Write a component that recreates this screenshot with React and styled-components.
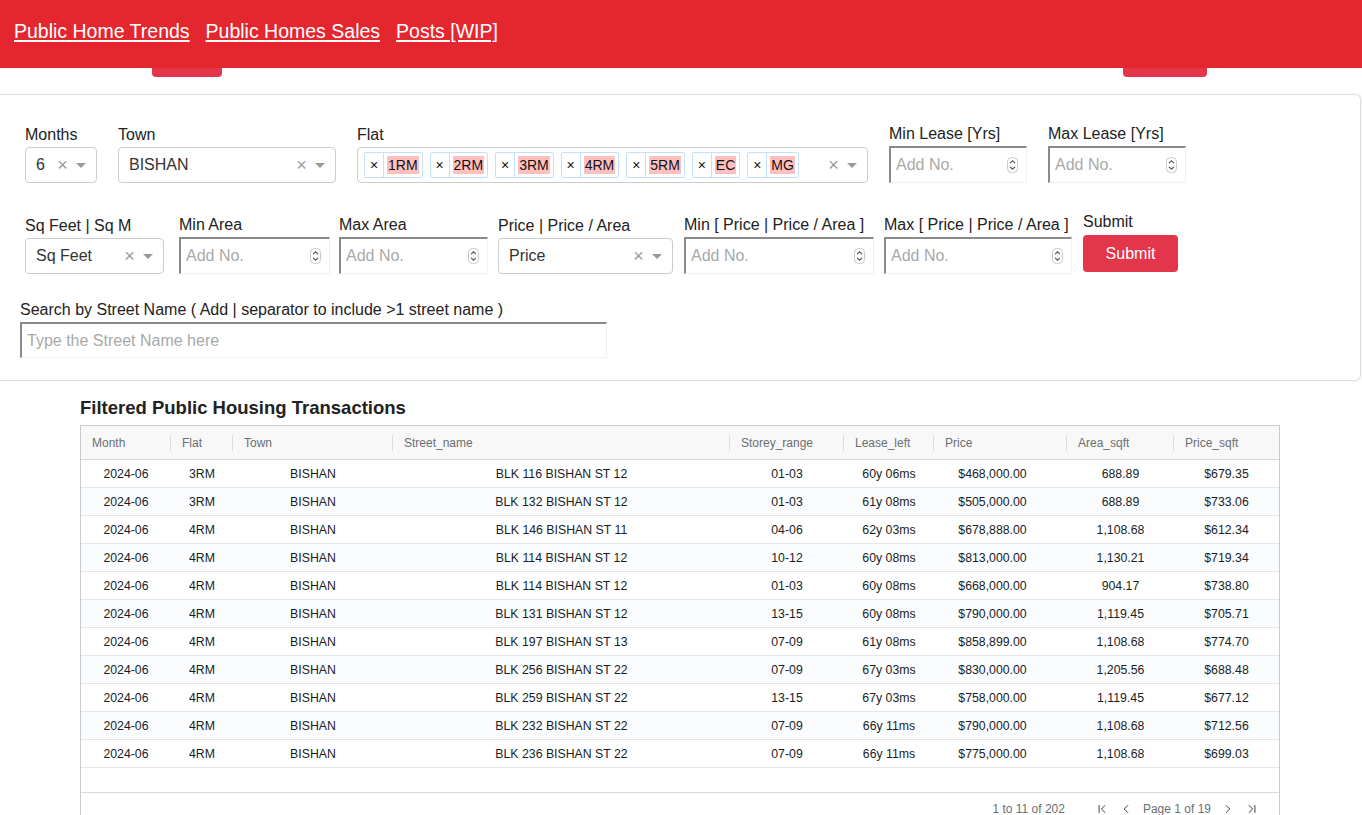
import styled, { createGlobalStyle } from "styled-components";
import { ChevronFirst, ChevronLeft, ChevronRight, ChevronLast } from "lucide-react";

const GlobalStyle = createGlobalStyle`
  html, body {
    margin: 0;
    padding: 0;
    background: #fff;
    font-family: "Liberation Sans", Arial, sans-serif;
    color: #212529;
  }
  * { box-sizing: border-box; }
`;

const TopBar = styled.nav`
  position: fixed;
  top: 0;
  left: 0;
  right: 0;
  height: 68px;
  background: #e4262f;
  display: flex;
  align-items: center;
  gap: 16px;
  padding: 0 0 6px 14px;
  z-index: 10;
`;

const NavLink = styled.a`
  color: #fff;
  font-size: 19.5px;
  text-decoration: underline;
  text-underline-offset: 2px;
  text-decoration-thickness: 1.5px;
  cursor: pointer;
`;

const PeekRow = styled.div`
  height: 77px;
  display: flex;
  align-items: flex-end;
`;

const PeekButton = styled.div`
  width: ${(p) => p.$w}px;
  height: 40px;
  margin-left: ${(p) => p.$ml}px;
  background: #e4364a;
  border-radius: 4px;
`;

const FilterCard = styled.section`
  margin-top: 17px;
  width: 1361px;
  border: 1px solid #dedede;
  border-left: none;
  border-radius: 0 6px 6px 0;
  padding: 29px 0 22px 20px;
  box-shadow: 2px 0 3px rgba(0, 0, 0, 0.04);
`;

const FieldRow = styled.div`
  display: flex;
  align-items: flex-end;
  gap: ${(p) => p.$gap || 0}px;
  padding-left: ${(p) => p.$pl || 0}px;
  margin-top: ${(p) => p.$mt || 0}px;
`;

const Field = styled.div`
  display: flex;
  flex-direction: column;
  width: ${(p) => (p.$w ? `${p.$w}px` : "auto")};
  margin-bottom: ${(p) => p.$mb || 0}px;
`;

const Label = styled.label`
  font-size: 16px;
  line-height: 19px;
  color: #222;
  margin-bottom: ${(p) => p.$mb ?? 3}px;
  white-space: nowrap;
`;

const SelectBox = styled.div`
  width: ${(p) => p.$w}px;
  height: 36px;
  border: 1px solid #ccc;
  border-radius: 4px;
  display: flex;
  align-items: center;
  padding-left: ${(p) => p.$pl ?? 10}px;
  background: #fff;
`;

const SelectValue = styled.span`
  flex: 1;
  font-size: 16px;
  color: #333;
  white-space: nowrap;
`;

const ClearX = styled.span`
  width: 17px;
  text-align: center;
  font-size: 18px;
  line-height: 1;
  color: #999;
`;

const ArrowZone = styled.span`
  width: 25px;
  display: flex;
  justify-content: center;
  padding-right: 5px;

  &::before {
    content: "";
    border-style: solid;
    border-width: 5px 5px 0;
    border-color: #999 transparent transparent;
  }
`;

const Chips = styled.div`
  flex: 1;
  display: flex;
  gap: 7px;
`;

const Chip = styled.span`
  display: flex;
  height: 26px;
  border: 1px solid #c2e0ff;
  border-radius: 2px;
  font-size: 14px;
  color: #111;
`;

const ChipX = styled.span`
  width: 19px;
  display: flex;
  align-items: center;
  justify-content: center;
  border-right: 1px solid #c2e0ff;
  font-size: 14px;
`;

const ChipLabel = styled.span`
  display: flex;
  align-items: center;
  padding: 0 3px;

  mark {
    background: #ffbfbf;
    color: #111;
    padding: 1px 1px;
  }
`;

const NumberBox = styled.div`
  width: ${(p) => p.$w}px;
  height: ${(p) => p.$h || 37}px;
  display: flex;
  align-items: center;
  border-top: 2px solid #8a8a8a;
  border-left: 2px solid #8a8a8a;
  border-right: 1px solid #f1f1f1;
  border-bottom: 1px solid #f1f1f1;
  padding: 0 8px 0 5px;
  background: #fff;
`;

const NumberInput = styled.input`
  flex: 1;
  min-width: 0;
  border: none;
  outline: none;
  font-family: inherit;
  font-size: 16px;
  color: #333;
  padding: 0;

  &::placeholder {
    color: #a9a9a9;
  }
`;

const SubmitButton = styled.button`
  width: 95px;
  height: 37px;
  border: none;
  border-radius: 4px;
  background: #e4364a;
  color: #fff;
  font-family: inherit;
  font-size: 16px;
`;

const TableSection = styled.section`
  padding: 16px 0 0 80px;
`;

const TableTitle = styled.h2`
  margin: 0 0 6px;
  font-size: 18.5px;
  line-height: 22px;
  font-weight: 700;
  color: #222;
`;

const Grid = styled.div`
  width: 1200px;
  border: 1px solid #c9ccce;
  font-size: 12px;
  color: #181d1f;
`;

const cols = "90px 62px 160px 337px 114px 90px 133px 107px 1fr";

const HeadRow = styled.div`
  display: grid;
  grid-template-columns: ${cols};
  height: 34px;
  background: #f8f8f8;
  border-bottom: 1px solid #d6d8da;
`;

const HeadCell = styled.div`
  position: relative;
  display: flex;
  align-items: center;
  padding-left: 11px;
  color: #6b6f72;

  &::after {
    content: "";
    display: ${(p) => (p.$last ? "none" : "block")};
    position: absolute;
    right: 0;
    top: 9px;
    height: 16px;
    width: 1px;
    background: #dcdcdc;
  }
`;

const Body = styled.div`
  height: 333px;
  border-bottom: 1px solid #d6d8da;
`;

const BodyRow = styled.div`
  display: grid;
  grid-template-columns: ${cols};
  height: 28px;
  background: ${(p) => (p.$alt ? "#fbfcfe" : "#fff")};
  border-bottom: 1px solid #e4e6e8;
`;

const BodyCell = styled.div`
  display: flex;
  align-items: center;
  justify-content: center;
  font-size: 12.3px;
  padding-right: ${(p) => p.$pr || 0}px;
`;

const Pager = styled.div`
  height: 40px;
  display: flex;
  align-items: center;
  justify-content: flex-end;
  padding: 0 20px 8px 0;
  color: #6b6f72;
  font-size: 12px;
  gap: 10px;
`;

const PagerCount = styled.span`
  margin-right: 20px;
`;

const PagerText = styled.span`
  color: #6b6f72;
`;

const Spinner = () => (
  <svg width="11" height="16" viewBox="0 0 11 16">
    <rect x="0.5" y="0.5" width="10" height="15" rx="4" fill="#fff" stroke="#c8c8c8" />
    <path d="M3 6.2 5.5 3.8 8 6.2M3 9.8 5.5 12.2 8 9.8" fill="none" stroke="#555" strokeWidth="1.1" />
  </svg>
);

const NumField = ({ label, w, bw }) => (
  <Field $w={w}>
    <Label>{label}</Label>
    <NumberBox $w={bw}>
      <NumberInput placeholder="Add No." />
      <Spinner />
    </NumberBox>
  </Field>
);

const SelectField = ({ label, value, w, bw }) => (
  <Field $w={w}>
    <Label>{label}</Label>
    <SelectBox $w={bw}>
      <SelectValue>{value}</SelectValue>
      <ClearX>×</ClearX>
      <ArrowZone />
    </SelectBox>
  </Field>
);

const flats = ["1RM", "2RM", "3RM", "4RM", "5RM", "EC", "MG"];

const headers = [
  "Month", "Flat", "Town", "Street_name", "Storey_range",
  "Lease_left", "Price", "Area_sqft", "Price_sqft",
];

const rows = [
  ["3RM", "BLK 116 BISHAN ST 12", "01-03", "60y 06ms", "$468,000.00", "688.89", "$679.35"],
  ["3RM", "BLK 132 BISHAN ST 12", "01-03", "61y 08ms", "$505,000.00", "688.89", "$733.06"],
  ["4RM", "BLK 146 BISHAN ST 11", "04-06", "62y 03ms", "$678,888.00", "1,108.68", "$612.34"],
  ["4RM", "BLK 114 BISHAN ST 12", "10-12", "60y 08ms", "$813,000.00", "1,130.21", "$719.34"],
  ["4RM", "BLK 114 BISHAN ST 12", "01-03", "60y 08ms", "$668,000.00", "904.17", "$738.80"],
  ["4RM", "BLK 131 BISHAN ST 12", "13-15", "60y 08ms", "$790,000.00", "1,119.45", "$705.71"],
  ["4RM", "BLK 197 BISHAN ST 13", "07-09", "61y 08ms", "$858,899.00", "1,108.68", "$774.70"],
  ["4RM", "BLK 256 BISHAN ST 22", "07-09", "67y 03ms", "$830,000.00", "1,205.56", "$688.48"],
  ["4RM", "BLK 259 BISHAN ST 22", "13-15", "67y 03ms", "$758,000.00", "1,119.45", "$677.12"],
  ["4RM", "BLK 232 BISHAN ST 22", "07-09", "66y 11ms", "$790,000.00", "1,108.68", "$712.56"],
  ["4RM", "BLK 236 BISHAN ST 22", "07-09", "66y 11ms", "$775,000.00", "1,108.68", "$699.03"],
];

const App = () => {
  return (
    <>
      <GlobalStyle />
      <TopBar>
        <NavLink>Public Home Trends</NavLink>
        <NavLink>Public Homes Sales</NavLink>
        <NavLink>Posts [WIP]</NavLink>
      </TopBar>

      <PeekRow>
        <PeekButton $w={70} $ml={152} />
        <PeekButton $w={84} $ml={901} />
      </PeekRow>

      <FilterCard>
        <FieldRow $gap={21} $pl={5}>
          <SelectField label="Months" value="6" bw={72} />
          <SelectField label="Town" value="BISHAN" bw={218} />
          <Field>
            <Label>Flat</Label>
            <SelectBox $w={511} $pl={6}>
              <Chips>
                {flats.map((f) => (
                  <Chip key={f}>
                    <ChipX>×</ChipX>
                    <ChipLabel><mark>{f}</mark></ChipLabel>
                  </Chip>
                ))}
              </Chips>
              <ClearX>×</ClearX>
              <ArrowZone />
            </SelectBox>
          </Field>
          <NumField label="Min Lease [Yrs]" bw={138} />
          <NumField label="Max Lease [Yrs]" bw={138} />
        </FieldRow>

        <FieldRow $pl={5} $mt={29}>
          <SelectField label="Sq Feet | Sq M" value="Sq Feet" w={154} bw={139} />
          <NumField label="Min Area" w={160} bw={151} />
          <NumField label="Max Area" w={159} bw={149} />
          <SelectField label="Price | Price / Area" value="Price" w={186} bw={175} />
          <NumField label="Min [ Price | Price / Area ]" w={200} bw={190} />
          <NumField label="Max [ Price | Price / Area ]" w={199} bw={188} />
          <Field $mb={2}>
            <Label $mb={4}>Submit</Label>
            <SubmitButton>Submit</SubmitButton>
          </Field>
        </FieldRow>

        <FieldRow $mt={26}>
          <Field>
            <Label>Search by Street Name ( Add | separator to include &gt;1 street name )</Label>
            <NumberBox $w={587} $h={36}>
              <NumberInput placeholder="Type the Street Name here" />
            </NumberBox>
          </Field>
        </FieldRow>
      </FilterCard>

      <TableSection>
        <TableTitle>Filtered Public Housing Transactions</TableTitle>
        <Grid>
          <HeadRow>
            {headers.map((h, i) => (
              <HeadCell key={h} $last={i === headers.length - 1}>{h}</HeadCell>
            ))}
          </HeadRow>
          <Body>
            {rows.map((r, i) => (
              <BodyRow key={i} $alt={i % 2 === 1}>
                <BodyCell>2024-06</BodyCell>
                <BodyCell>{r[0]}</BodyCell>
                <BodyCell>BISHAN</BodyCell>
                <BodyCell>{r[1]}</BodyCell>
                <BodyCell>{r[2]}</BodyCell>
                <BodyCell>{r[3]}</BodyCell>
                <BodyCell $pr={16}>{r[4]}</BodyCell>
                <BodyCell>{r[5]}</BodyCell>
                <BodyCell>{r[6]}</BodyCell>
              </BodyRow>
            ))}
          </Body>
          <Pager>
            <PagerCount>1 to 11 of 202</PagerCount>
            <ChevronFirst size={14} strokeWidth={1.6} color="#333" />
            <ChevronLeft size={14} strokeWidth={1.6} color="#333" />
            <PagerText>Page 1 of 19</PagerText>
            <ChevronRight size={14} strokeWidth={1.6} color="#333" />
            <ChevronLast size={14} strokeWidth={1.6} color="#333" />
          </Pager>
        </Grid>
      </TableSection>
    </>
  );
};

export default App;
